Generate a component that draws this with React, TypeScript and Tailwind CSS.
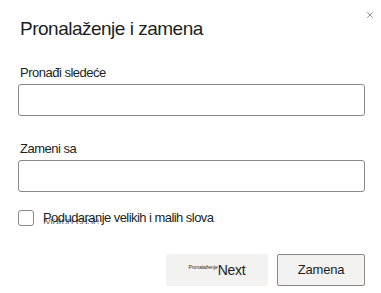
import { X } from "lucide-react";

export default function App() {
  return (
    <div className="relative h-[293px] w-[381px] overflow-hidden bg-white font-['Liberation_Sans',Arial,sans-serif] text-[#201f1e]">
      <button className="absolute right-[6px] top-[10px] flex h-[10px] w-[10px] items-center justify-center text-[#605e5c]">
        <X className="h-[10px] w-[10px]" strokeWidth={1.6} />
      </button>

      <div className="pl-[20px] pr-[16px] pt-[17px]">
        <h1 className="text-[19px] leading-[24px] tracking-[-0.5px]">Pronalaženje i zamena</h1>

        <div className="mt-[24px]">
          <label className="block text-[13px] leading-[16px] tracking-[-0.5px]">Pronađi sledeće</label>
          <input className="-ml-[2px] mt-[3px] block h-[32px] w-[347px] rounded-[3px] border border-[#8a8886] outline-none" />
        </div>

        <div className="mt-[25px]">
          <label className="block text-[13px] leading-[16px] tracking-[-0.5px]">Zameni sa</label>
          <input className="-ml-[2px] mt-[3px] block h-[32px] w-[347px] rounded-[3px] border border-[#8a8886] outline-none" />
        </div>

        <div className="-ml-[2px] mt-[18px] flex items-center gap-[9px]">
          <span className="h-[16px] w-[16px] rounded-[3px] border border-[#8a8886]" />
          <span className="relative text-[13px] leading-[16px] tracking-[-0.55px]">
            <span className="absolute left-[0px] top-[9px] h-[5px] overflow-hidden text-[12px] leading-[12px] text-[#797775]">
              <span className="-mt-[4px] block">Match case</span>
            </span>
            <span className="relative">Podudaranje velikih i malih slova</span>
          </span>
        </div>

        <div className="mt-[28px] flex justify-end gap-[9px]">
          <button className="flex h-[32px] w-[102px] items-center justify-center rounded-[2px] bg-[#f3f2f1]">
            <span className="mb-[6px] text-[5px] leading-[6px]">Pronalaženje</span>
            <span className="text-[14px] leading-[18px] tracking-[-0.3px]">Next</span>
          </button>
          <button className="h-[32px] w-[88px] rounded-[2px] border border-[#8a8886] bg-[#f3f2f1] text-[13px] leading-[18px] tracking-[-0.2px]">
            Zamena
          </button>
        </div>
      </div>
    </div>
  );
}
